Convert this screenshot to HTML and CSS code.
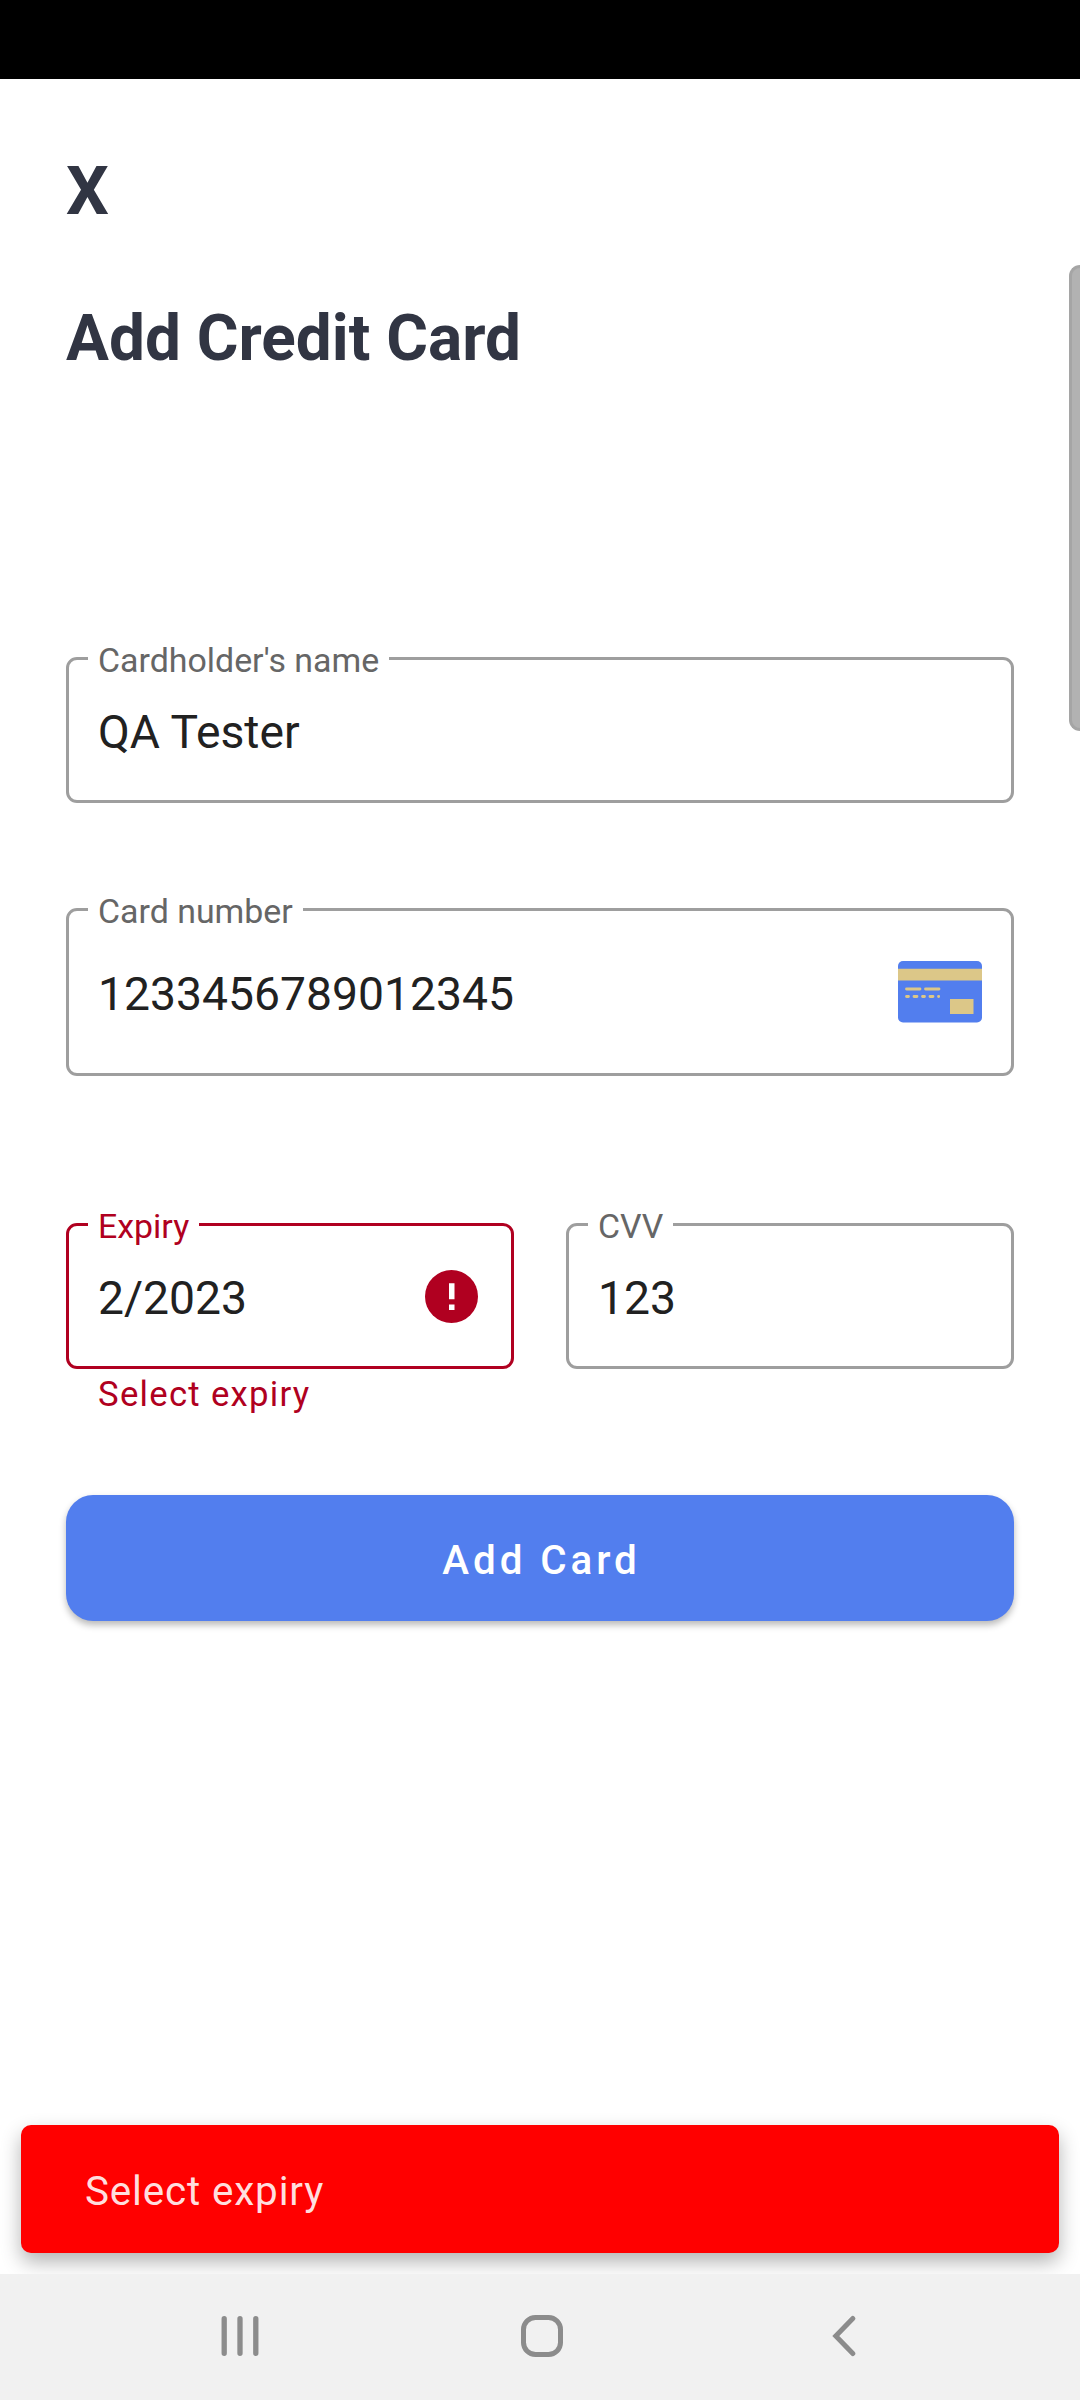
FILE: index.html
```html
<!DOCTYPE html>
<html lang="en">
<head>
<meta charset="utf-8">
<title>Add Credit Card</title>
<link rel="stylesheet" href="styles.css">
</head>
<body>
<div class="screen">
  <div class="status-bar"></div>
  <main class="content">
    <div class="close">X</div>
    <h1 class="title">Add Credit Card</h1>
    <form class="form">
      <div class="field field-name">
        <label class="label">Cardholder's name</label>
        <span class="value">QA Tester</span>
      </div>
      <div class="field field-number">
        <label class="label">Card number</label>
        <span class="value">1233456789012345</span>
        <svg class="card-icon" width="84" height="62" viewBox="0 0 84 62">
          <rect width="84" height="61.5" rx="5" fill="#527eee"/>
          <path d="M0 7.8h84v11.8H0z" fill="#dcc788"/>
          <path d="M8.5 28h13.5M27.500 28H41" stroke="#dcc788" stroke-width="2.800" stroke-linecap="round"/>
          <path d="M8.500 35.500h2M16 35.500h3M24.500 35.500h2M32 35.500h3M40.500 35.500h.2" stroke="#dcc788" stroke-width="2.800" stroke-linecap="round"/>
          <path d="M52 38h23.500v15H52z" fill="#dcc788"/>
        </svg>
      </div>
      <div class="row">
        <div class="column">
          <div class="field field-error">
            <label class="label">Expiry</label>
            <span class="value">2/2023</span>
            <svg class="error-icon" width="53" height="53" viewBox="0 0 53 53">
              <circle cx="26.500" cy="26.500" r="26.500" fill="#b00020"/>
              <path d="M24 13.300h5.500v16H24zM24 34.500h5.500V40H24z" fill="#fff"/>
            </svg>
          </div>
          <div class="helper">Select expiry</div>
        </div>
        <div class="column">
          <div class="field">
            <label class="label">CVV</label>
            <span class="value">123</span>
          </div>
        </div>
      </div>
      <button class="submit" type="button">Add Card</button>
    </form>
    <div class="snackbar">Select expiry</div>
  </main>
  <nav class="nav-bar">
    <svg width="38" height="42" viewBox="0 0 38 42" fill="none" stroke="#8c8c8c" stroke-width="5.300" stroke-linecap="round">
      <path d="M3.200 3.700v34.600M19 3.700v34.600M34.800 3.700v34.600"/>
    </svg>
    <svg class="nav-home" width="42" height="42" viewBox="0 0 42 42" fill="none" stroke="#8c8c8c" stroke-width="5">
      <rect x="2.500" y="2.500" width="37" height="37" rx="12"/>
    </svg>
    <svg class="nav-back" width="24" height="42" viewBox="0 0 24 42" fill="none" stroke="#8c8c8c" stroke-width="5" stroke-linecap="round">
      <path d="M20.800 3.500L3.800 21l17 17.500"/>
    </svg>
  </nav>
  <div class="scrollbar"></div>
</div>
</body>
</html>
```
FILE: styles.css
```css
* { box-sizing: border-box; }

body {
  margin: 0;
  font-family: Roboto, sans-serif;
  background: #fff;
}

.screen {
  position: relative;
  display: flex;
  flex-direction: column;
  width: 1080px;
  height: 2400px;
  overflow: hidden;
}

.status-bar { height: 79px; background: #000; }

.content {
  display: flex;
  flex-direction: column;
  flex: 1;
  overflow: hidden;
}

.close,
.title {
  margin: 0 66px;
  font-weight: 700;
  color: #313543;
}

.close { margin-top: 72px; font-size: 67.5px; line-height: 80px; }
.title { margin-top: 68px; font-size: 63.9px; line-height: 80px; }

.form {
  display: flex;
  flex-direction: column;
  margin: 278px 66px 0;
}

.field {
  position: relative;
  display: flex;
  align-items: center;
  justify-content: space-between;
  height: 146px;
  padding: 0 29px 0 29px;
  border: 3px solid #9e9e9e;
  border-radius: 11px;
}

.label {
  position: absolute;
  top: -19px;
  left: 19px;
  padding: 0 10px 0 10px;
  font-size: 33.9px;
  line-height: 40px;
  color: #666;
  background: #fff;
  white-space: nowrap;
}

.value {
  font-size: 46.25px;
  line-height: 54px;
  color: #212121;
  padding-top: 3px;
}

.field-number {
  height: 168px;
  margin-top: 105px;
}

.row {
  display: grid;
  grid-template-columns: 1fr 1fr;
  gap: 52px;
  margin-top: 147px;
}

.field-error { padding-right: 33px; border-color: #b00020; }
.field-error .label { color: #b00020; }

.helper {
  height: 40px;
  margin: 5px 32px 0;
  font-size: 34.7px;
  line-height: 40px;
  letter-spacing: 1.28px;
  color: #b00020;
}

.submit {
  height: 126px;
  margin-top: 81px;
  padding: 6px 0 0 3px;
  border: 0;
  border-radius: 27px;
  font: 500 40.4px/46px Roboto, sans-serif;
  letter-spacing: 3.9px;
  color: #fff;
  background: #527eee;
  box-shadow: 0 4px 7px rgba(0, 0, 0, 0.28);
}

.snackbar {
  display: flex;
  align-items: center;
  height: 128px;
  margin: auto 21px 21px;
  padding: 4px 64px 0;
  border-radius: 10px;
  font-size: 40.4px;
  letter-spacing: 0.85px;
  color: #ffdede;
  background: #f00;
  box-shadow: 0 9px 20px rgba(0, 0, 0, 0.3);
}

.nav-bar {
  display: flex;
  align-items: center;
  height: 126px;
  padding: 0 0 2px 221px;
  background: #f1f1f1;
}

.nav-home { margin-left: 262px; }
.nav-back { margin-left: 269px; }

.scrollbar {
  position: absolute;
  top: 265px;
  right: 0;
  width: 11px;
  height: 466px;
  border: 3px solid #a5a5a5;
  border-right: 0;
  border-radius: 11px 0 0 11px;
  background: #b2b2b2;
}
```
